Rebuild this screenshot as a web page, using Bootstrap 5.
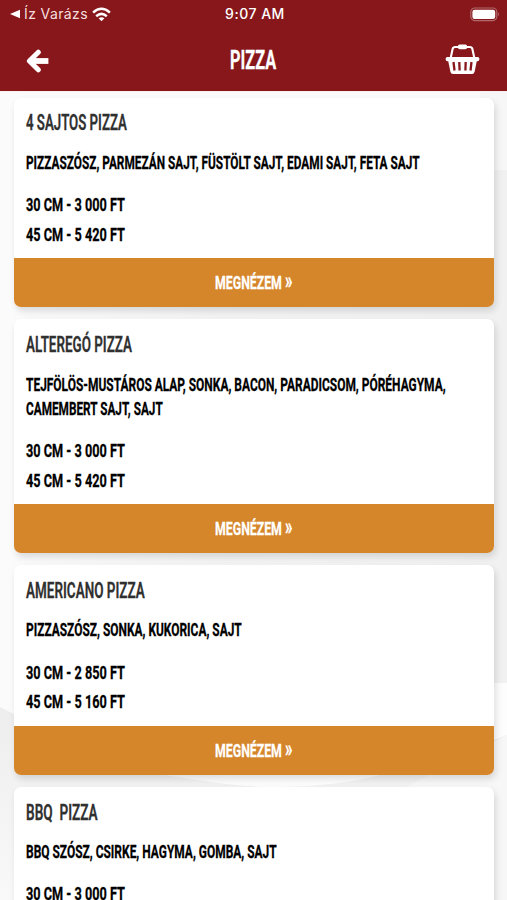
<!DOCTYPE html>
<html lang="hu">
<head>
<meta charset="utf-8">
<meta name="viewport" content="width=device-width, initial-scale=1">
<title>Pizza</title>
<link href="https://cdn.jsdelivr.net/npm/bootstrap@5.3.0/dist/css/bootstrap.min.css" rel="stylesheet">
<style>
  html, body { height: 900px; overflow: hidden; }
  body { font-family: Roboto, "Liberation Sans", sans-serif; background: #fbfbfb; color: #000; }
  .topbar { height: 91px; background: #87171b; color: #fff; box-shadow: 0 1px 0 #fbeeee; flex: none; }
  .status-row { height: 28px; padding: 0 7px 0 10px; font: 400 14px/28px Inter, sans-serif; }
  .status-row > * { flex: 1 1 0; }
  .clock { font-weight: 500; letter-spacing: .5px; }
  .back-app { letter-spacing: .38px; color: #f5dede; }
  .title-row { height: 63px; padding: 0 27px 0 26px; }
  .title-row > * { flex: 1 1 0; }
  /* condensed display lettering; the horizontal scale is set by the script */
  .tall { display: block; width: max-content; white-space: pre; font-weight: 700; transform-origin: 0 50%; -webkit-text-stroke: .3px currentColor; }
  .slot { display: flex; justify-content: center; overflow: visible; }
  .slot .tall { transform-origin: 50% 50%; font-weight: 700; }
  .screen-title { font-size: 25.5px; line-height: 60px; }
  .backdrop { position: absolute; left: 0; top: 92px; z-index: -1; }
  .menu { padding: 6.5px 12.7px 0 13.5px; gap: 12.4px; }
  .dish { flex: none; border: 0; border-radius: 7px; overflow: hidden; box-shadow: 2px 4px 7px rgba(0,0,0,.13); }
  .dish-body { padding: 13.7px 12px 8.7px; }
  .dish-name { font-size: 21.5px; line-height: 24px; color: #303030; margin: 0 0 15.5px; }
  .dish-name .tall { font-weight: 600; }
  .dish-text { font-size: 19px; line-height: 24px; margin: 0 0 15.2px; }
  .price { font-size: 19px; line-height: 29.8px; }
  .view-btn { height: 48.8px; padding: 0; border: 0; border-radius: 0; background: #d5852a; color: #fff; font-size: 19px; line-height: 49px; }
  .view-btn:hover { background: #c67b22; color: #fff; }
  .chevrons { font-size: 23px; line-height: 1; }
</style>
<script src="https://cdn.jsdelivr.net/npm/bootstrap@5.3.0/dist/js/bootstrap.bundle.min.js"></script>
</head>
<body class="d-flex flex-column position-relative">
<svg class="backdrop" width="507" height="808" viewBox="0 92 507 808" aria-hidden="true">
  <defs>
    <linearGradient id="g1" x1="0" y1="0" x2="0" y2="1"><stop offset="0" stop-color="#ececec"/><stop offset="1" stop-color="#f9f9f9"/></linearGradient>
    <linearGradient id="g2" x1="0" y1="0" x2="1" y2="0"><stop offset="0" stop-color="#fbfbfb"/><stop offset=".4" stop-color="#f4f4f4"/><stop offset="1" stop-color="#f1f1f1"/></linearGradient>
  </defs>
  <path d="M0 180L507 150V683L470 700H0Z" fill="url(#g2)"/>
  <path d="M480 92H507V170H480Z" fill="#f7f7f7"/>
  <path d="M0 180H14V710H0Z" fill="#fbfbfb"/>
  <path d="M0 707Q150 785 270 787Q380 786 507 683V735Q400 800 420 900H0Z" fill="url(#g1)"/>
  <path d="M165 775Q235 787 280 787Q340 786 380 775Z" fill="#fdfdfd"/>
  <path d="M480 683H507V735L480 745Z" fill="#fdfdfd"/>
  <path d="M507 735V900H400V790Z" fill="#f7f7f7"/>
</svg>

<header class="topbar">
  <div class="status-row d-flex align-items-center">
    <div class="d-flex align-items-center">
      <svg width="10" height="10" viewBox="0 0 10 10" class="me-1" aria-hidden="true"><path d="M0 5L10 .8V9.2Z" fill="#fff"/></svg>
      <span class="back-app">Íz Varázs</span>
      <svg width="19" height="15" viewBox="0 0 19 15" class="ms-1" aria-hidden="true"><g fill="none" stroke="#fff" stroke-width="2.5"><path d="M1.1 5.6Q9.5-2 17.9 5.6M4.2 9.2Q9.5 4.6 14.8 9.2"/></g><path d="M9.5 14.2L6.6 11.3Q9.5 9 12.4 11.3Z" fill="#fff"/></svg>
    </div>
    <div class="clock text-center">9:07 AM</div>
    <div class="d-flex justify-content-end">
      <svg width="30" height="15" viewBox="0 0 30 15" aria-hidden="true"><rect x=".8" y="1" width="26" height="12.6" rx="4" fill="none" stroke="#b06a6d" stroke-width="1.2"/><rect x="2.4" y="2.7" width="22.8" height="9.2" rx="2.2" fill="#fff"/><path d="M28 5.2Q30 7.2 28 9.3Z" fill="#b06a6d"/></svg>
    </div>
  </div>
  <div class="title-row d-flex align-items-center">
    <a href="#" class="d-flex pt-1" aria-label="Vissza">
      <svg width="24" height="26" viewBox="0 0 24 26" fill="none" stroke="#fff" stroke-linejoin="miter" aria-hidden="true"><path d="M12.3 3.2L3.4 12L12.3 20.8" stroke-width="5" stroke-linecap="round" stroke-linejoin="round"/><path d="M4 12H22.4" stroke-width="5.8"/></svg>
    </a>
    <h1 class="screen-title slot m-0"><span class="tall" data-w="46">PIZZA</span></h1>
    <a href="#" class="d-flex justify-content-end" aria-label="Kosár">
      <svg width="35" height="32" viewBox="0 0 35 32" aria-hidden="true"><path d="M5.8 13.5L7.6 5Q8.1 3 10.2 3H24.8Q26.9 3 27.4 5L29.2 13.5" fill="none" stroke="#fff" stroke-width="2.1"/><rect x="12.8" y=".4" width="9.4" height="4.8" rx="2" fill="#fff"/><rect x=".7" y="13" width="33.6" height="4.2" rx="1.6" fill="#fff"/><path d="M3 16H32L29.6 27.8Q29.1 30 27 30H8Q5.9 30 5.4 27.8Z" fill="#fff"/><path d="M8.5 18L9.5 26.5M14.3 18L14.6 26.5M20.7 18L20.4 26.5M26.5 18L25.5 26.5" stroke="#87171b" stroke-width="2.3"/></svg>
    </a>
  </div>
</header>

<main class="menu d-flex flex-column">
  <article class="card dish">
    <div class="dish-body">
      <h2 class="dish-name"><span class="tall" data-w="101">4 SAJTOS PIZZA</span></h2>
      <p class="dish-text"><span class="tall" data-w="393.5">PIZZASZÓSZ, PARMEZÁN SAJT, FÜSTÖLT SAJT, EDAMI SAJT, FETA SAJT</span></p>
      <div class="price"><span class="tall" data-w="99">30 CM - 3 000 FT</span><span class="tall" data-w="99">45 CM - 5 420 FT</span></div>
    </div>
    <a href="#" class="btn view-btn slot"><span class="tall" data-w="77">MEGNÉZEM <span class="chevrons">»</span></span></a>
  </article>
  <article class="card dish">
    <div class="dish-body">
      <h2 class="dish-name"><span class="tall" data-w="106">ALTEREGÓ PIZZA</span></h2>
      <p class="dish-text"><span class="tall" data-w="419.5">TEJFÖLÖS-MUSTÁROS ALAP, SONKA, BACON, PARADICSOM, PÓRÉHAGYMA,</span><span class="tall" data-w="136.5">CAMEMBERT SAJT, SAJT</span></p>
      <div class="price"><span class="tall" data-w="99">30 CM - 3 000 FT</span><span class="tall" data-w="99">45 CM - 5 420 FT</span></div>
    </div>
    <a href="#" class="btn view-btn slot"><span class="tall" data-w="77">MEGNÉZEM <span class="chevrons">»</span></span></a>
  </article>
  <article class="card dish">
    <div class="dish-body">
      <h2 class="dish-name"><span class="tall" data-w="118.5">AMERICANO PIZZA</span></h2>
      <p class="dish-text"><span class="tall" data-w="216">PIZZASZÓSZ, SONKA, KUKORICA, SAJT</span></p>
      <div class="price"><span class="tall" data-w="99">30 CM - 2 850 FT</span><span class="tall" data-w="99">45 CM - 5 160 FT</span></div>
    </div>
    <a href="#" class="btn view-btn slot"><span class="tall" data-w="77">MEGNÉZEM <span class="chevrons">»</span></span></a>
  </article>
  <article class="card dish">
    <div class="dish-body">
      <h2 class="dish-name"><span class="tall" data-w="71.5">BBQ  PIZZA</span></h2>
      <p class="dish-text"><span class="tall" data-w="251">BBQ SZÓSZ, CSIRKE, HAGYMA, GOMBA, SAJT</span></p>
      <div class="price"><span class="tall" data-w="99">30 CM - 3 000 FT</span></div>
    </div>
  </article>
</main>
<script>
  // Condense each line to its set width
  document.querySelectorAll('.tall[data-w]').forEach(function (el) {
    el.style.transform = 'scaleX(' + (el.dataset.w / el.offsetWidth) + ')';
  });
</script>
</body>
</html>
